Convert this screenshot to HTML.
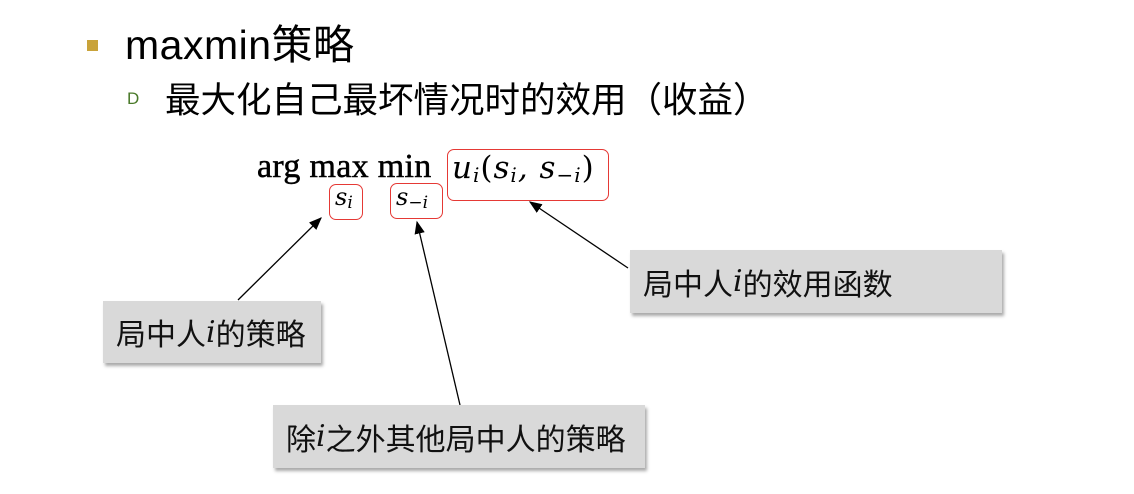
<!DOCTYPE html>
<html><head><meta charset="utf-8"><style>
body{margin:0;width:1134px;height:494px;background:#fff;position:relative;overflow:hidden;font-family:"Liberation Sans","Noto Sans CJK SC",sans-serif;}
.a{position:absolute;white-space:nowrap}
.box{position:absolute;background:#d9d9d9;box-shadow:2px 3px 3px #aaa;font-size:30px;color:#111;box-sizing:border-box;padding-left:13px;display:flex;align-items:center}
.m{font-family:"DejaVu Serif","Liberation Serif",serif;font-style:italic}
.rb{position:absolute;border:1.5px solid #e53935;border-radius:7px}
</style></head><body>
<div class="a" style="left:87px;top:40px;width:11px;height:11px;background:#c9a33a"></div>
<div class="a" style="left:125px;top:11px;font-size:41px;color:#000;letter-spacing:0.5px">maxmin策略</div>
<div class="a" style="left:127px;top:89px;font-size:17px;color:#4a7a2a">D</div>
<div class="a" style="left:165px;top:72px;font-size:35.5px;color:#000">最大化自己最坏情况时的效用（收益）</div>

<div class="a" style="left:257px;top:148px;font-size:34px;font-family:'Liberation Serif',serif;color:#000;letter-spacing:0.3px;-webkit-text-stroke:0.5px #000">arg max min</div>
<div class="a m" style="left:452px;top:150px;font-size:31px;color:#000;letter-spacing:1px">u<span style="font-size:20px;position:relative;top:4px">i</span><span style="font-style:normal">(</span>s<span style="font-size:20px;position:relative;top:4px">i</span>, s<span style="font-size:20px;position:relative;top:4px">−i</span><span style="font-style:normal">)</span></div>
<div class="a m" style="left:335px;top:183px;font-size:24px">s<span style="font-size:17px;position:relative;top:3px">i</span></div>
<div class="a m" style="left:396px;top:183px;font-size:24px">s<span style="font-size:17px;position:relative;top:3px">−i</span></div>
<div class="rb" style="left:447px;top:149px;width:160px;height:50px"></div>
<div class="rb" style="left:329px;top:184px;width:32px;height:34px"></div>
<div class="rb" style="left:390px;top:183px;width:51px;height:34px"></div>

<svg class="a" style="left:0;top:0" width="1134" height="494">
<defs><marker id="ar" markerWidth="10" markerHeight="8" refX="9" refY="4" orient="auto"><path d="M0,0L10,4L0,8z" fill="#000"/></marker></defs>
<line x1="238" y1="300" x2="321" y2="218" stroke="#000" stroke-width="1.3" marker-end="url(#ar)"/>
<line x1="460" y1="405" x2="417" y2="222" stroke="#000" stroke-width="1.3" marker-end="url(#ar)"/>
<line x1="628" y1="268" x2="530" y2="202" stroke="#000" stroke-width="1.3" marker-end="url(#ar)"/>
</svg>

<div class="box" style="left:103px;top:301px;width:218px;height:62px">局中人<span class="m">i</span>的策略</div>
<div class="box" style="left:273px;top:405px;width:372px;height:63px">除<span class="m">i</span>之外其他局中人的策略</div>
<div class="box" style="left:630px;top:250px;width:372px;height:63px">局中人<span class="m">i</span>的效用函数</div>
</body></html>
